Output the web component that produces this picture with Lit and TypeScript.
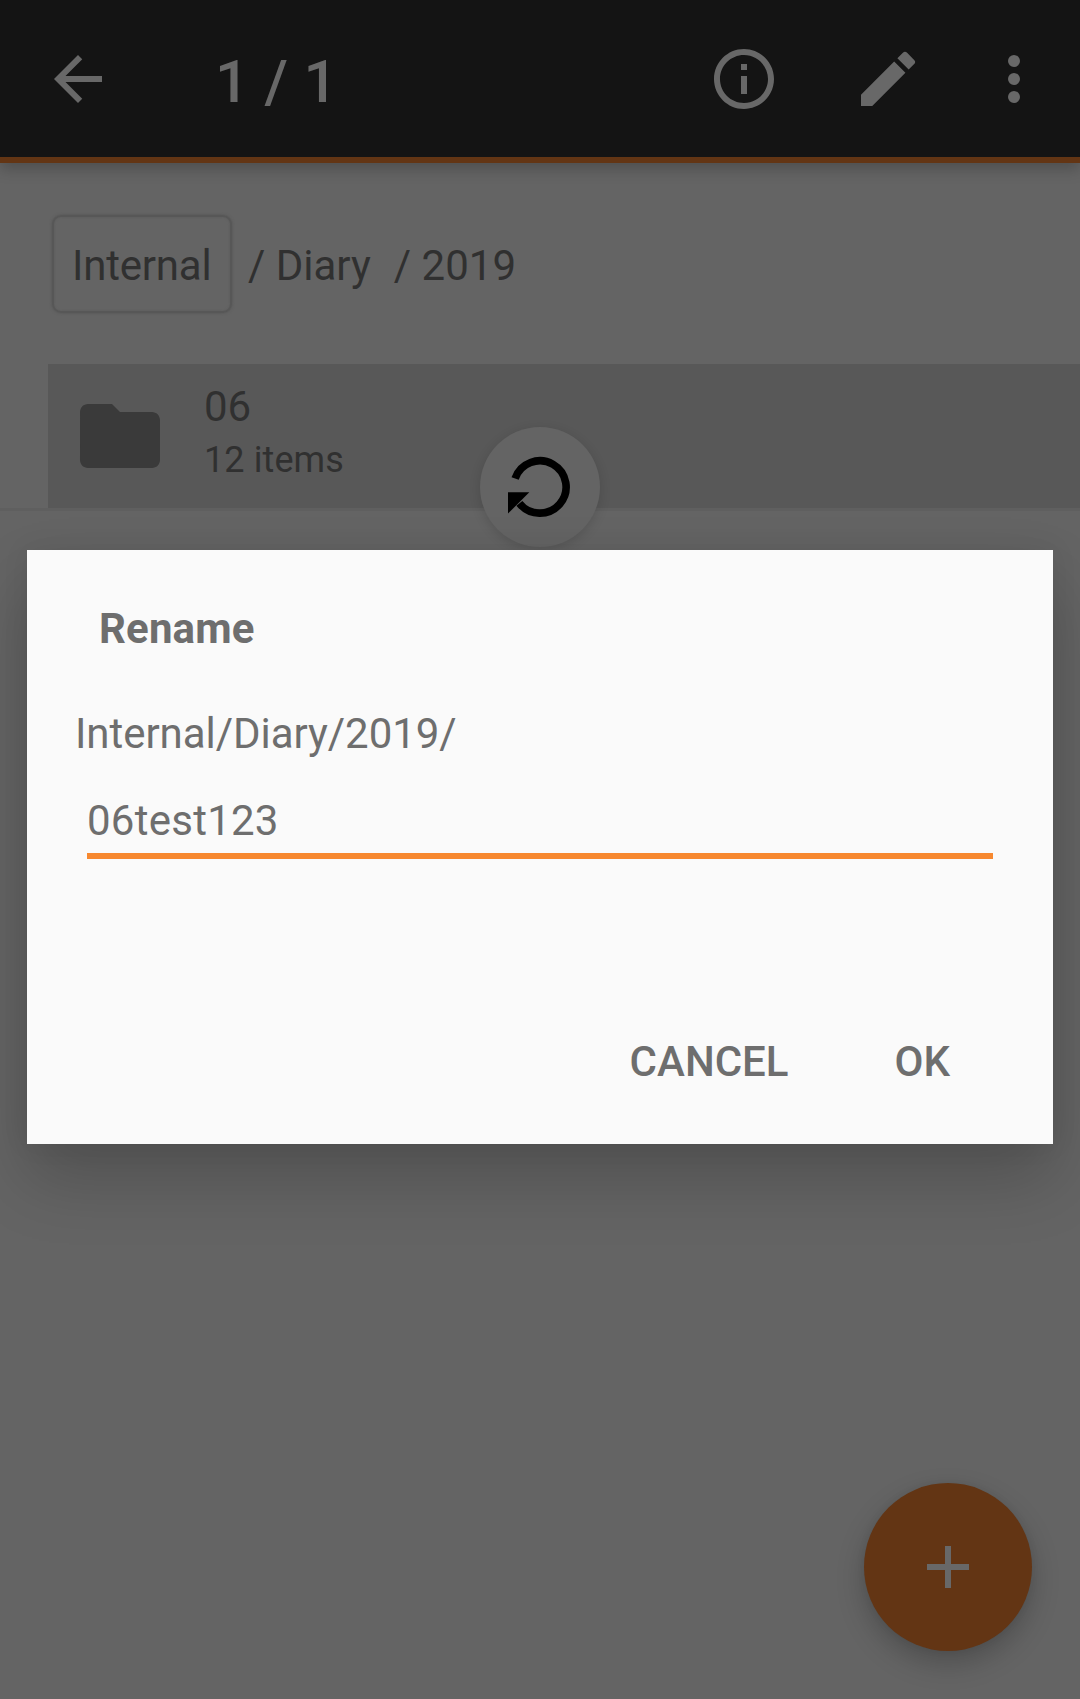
import { LitElement, html, css } from "lit";
import { customElement, property } from "lit/decorators.js";

@customElement("tool-bar")
class ToolBar extends LitElement {
  static styles = css`
    :host {
      display: block;
      position: relative;
    }
    .bar {
      display: flex;
      align-items: center;
      height: 163px;
      box-sizing: border-box;
      padding: 0 30px 5px 42px;
      background: #141414;
      border-bottom: 6px solid #633514;
      box-shadow: 0 6px 14px rgba(0, 0, 0, 0.22);
      color: #686868;
    }
    svg {
      display: block;
      width: 72px;
      height: 72px;
      fill: currentColor;
      margin-top: 6px;
    }
    .title {
      margin: 11px 0 0 101px;
      font-size: 60px;
      line-height: 70px;
      font-weight: 500;
      letter-spacing: 0.3px;
      flex: 1;
    }
    .info {
      margin-right: 72px;
    }
    .edit {
      margin-right: 54px;
    }
  `;
  render() {
    return html`
      <header class="bar">
        <svg viewBox="0 0 24 24"><path d="M20 11H7.83l5.59-5.59L12 4l-8 8 8 8 1.41-1.41L7.83 13H20v-2z" /></svg>
        <div class="title">1 / 1</div>
        <svg class="info" viewBox="0 0 24 24"><path d="M11 17h2v-6h-2v6zm1-15C6.48 2 2 6.48 2 12s4.48 10 10 10 10-4.480 10-10S17.52 2 12 2zm0 18c-4.410 0-8-3.590-8-8s3.590-8 8-8 8 3.590 8 8-3.590 8-8 8zM11 9h2V7h-2v2z" /></svg>
        <svg class="edit" viewBox="0 0 24 24"><path d="M3 17.250V21h3.750L17.810 9.940l-3.750-3.750L3 17.250zM20.710 7.040a1 1 0 0 0 0-1.410l-2.340-2.340a1 1 0 0 0-1.410 0l-1.830 1.830 3.750 3.750 1.830-1.830z" /></svg>
        <svg viewBox="0 0 24 24"><circle cx="12" cy="6" r="2" /><circle cx="12" cy="12" r="2" /><circle cx="12" cy="18" r="2" /></svg>
      </header>
    `;
  }
}

@customElement("folder-row")
class FolderRow extends LitElement {
  @property() name = "";
  @property() detail = "";
  static styles = css`
    :host {
      display: block;
      border-bottom: 3px solid #5f5f5f;
      padding-left: 48px;
    }
    .row {
      display: flex;
      align-items: flex-start;
      height: 144px;
      background: #585858;
      padding-left: 24px;
      color: #303030;
    }
    svg {
      width: 96px;
      height: 96px;
      margin: 24px 36px 0 0;
      fill: #3a3a3a;
    }
    .name {
      margin-top: 18px;
      font-size: 42px;
      line-height: 50px;
    }
    .detail {
      margin-top: 7px;
      font-size: 36px;
      line-height: 42px;
      letter-spacing: 0.1px;
    }
  `;
  render() {
    return html`
      <div class="row">
        <svg viewBox="0 0 24 24"><path d="M10 4H4c-1.100 0-1.990.9-1.990 2L2 18c0 1.100.9 2 2 2h16c1.100 0 2-.9 2-2V8c0-1.100-.9-2-2-2h-8l-2-2z" /></svg>
        <div>
          <div class="name">${this.name}</div>
          <div class="detail">${this.detail}</div>
        </div>
      </div>
    `;
  }
}

@customElement("rename-dialog")
class RenameDialog extends LitElement {
  @property() path = "";
  @property() value = "";
  static styles = css`
    :host {
      display: block;
      box-sizing: border-box;
      height: 594px;
      padding: 54px 60px 0 48px;
      background: #fafafa;
      color: #6e6e6e;
      font-size: 42px;
      line-height: 50px;
      box-shadow: 0 34px 64px rgba(0, 0, 0, 0.2), 0 0 26px rgba(0, 0, 0, 0.07);
    }
    .title {
      padding-left: 24px;
      font-weight: 700;
      letter-spacing: 0.15px;
    }
    .path {
      margin-top: 55px;
      letter-spacing: -0.05px;
    }
    .field {
      margin: 37px 0 0 12px;
      height: 57px;
      letter-spacing: 0.25px;
      border-bottom: 6px solid #f7882f;
    }
    .actions {
      display: flex;
      justify-content: flex-end;
      gap: 106px;
      padding-right: 43px;
      margin-top: 178px;
      font-weight: 500;
    }
  `;
  render() {
    return html`
      <div class="title">Rename</div>
      <div class="path">${this.path}</div>
      <div class="field">${this.value}</div>
      <div class="actions"><span>CANCEL</span><span>OK</span></div>
    `;
  }
}

@customElement("app-root")
class AppRoot extends LitElement {
  static styles = css`
    :host {
      display: block;
      position: relative;
      height: 1699px;
      overflow: hidden;
      background: #646464;
      font-family: Roboto, sans-serif;
    }
    .crumbs {
      display: flex;
      align-items: flex-start;
      height: 201px;
      box-sizing: border-box;
      padding: 52px 0 0 52px;
      font-size: 42px;
      line-height: 50px;
      color: #303030;
      white-space: pre;
    }
    .root {
      box-sizing: border-box;
      width: 180px;
      height: 98px;
      padding: 24px 0 0 18px;
      border: 2px solid #575757;
      border-radius: 9px;
      box-shadow: 0 0 3px #545454, inset 0 0 2px #5a5a5a;
      margin-right: 16px;
      letter-spacing: -0.2px;
    }
    .crumb {
      margin: 26px 23px 0 0;
    }
    .refresh {
      position: absolute;
      left: 480px;
      top: 427px;
      width: 120px;
      height: 120px;
      border-radius: 50%;
      background: #646464;
      box-shadow: 0 3px 12px rgba(0, 0, 0, 0.14);
    }
    .refresh svg {
      display: block;
    }
    .dialog {
      position: absolute;
      left: 27px;
      top: 550px;
      width: 1026px;
    }
    .fab {
      position: absolute;
      left: 864px;
      top: 1483px;
      width: 168px;
      height: 168px;
      border-radius: 50%;
      background: #633514;
      box-shadow: 0 12px 28px rgba(0, 0, 0, 0.22), 0 0 8px rgba(0, 0, 0, 0.06);
    }
  `;
  render() {
    return html`
      <tool-bar></tool-bar>
      <nav class="crumbs"><span class="root">Internal</span><span class="crumb">/ Diary</span><span class="crumb">/ 2019</span></nav>
      <folder-row name="06" detail="12 items"></folder-row>
      <div class="refresh">
        <svg width="120" height="120" viewBox="0 0 120 120">
          <path d="M35.100 51.500A26.200 26.200 0 1 1 39.400 76.300" fill="none" stroke="#000" stroke-width="7.600" />
          <path d="M28 65.300H49.300L28 86.600z" />
        </svg>
      </div>
      <rename-dialog class="dialog" path="Internal/Diary/2019/" value="06test123"></rename-dialog>
      <div class="fab">
        <svg width="168" height="168" viewBox="0 0 168 168"><path d="M63 84H105M84 63V105" stroke="#686868" stroke-width="6" /></svg>
      </div>
    `;
  }
}
